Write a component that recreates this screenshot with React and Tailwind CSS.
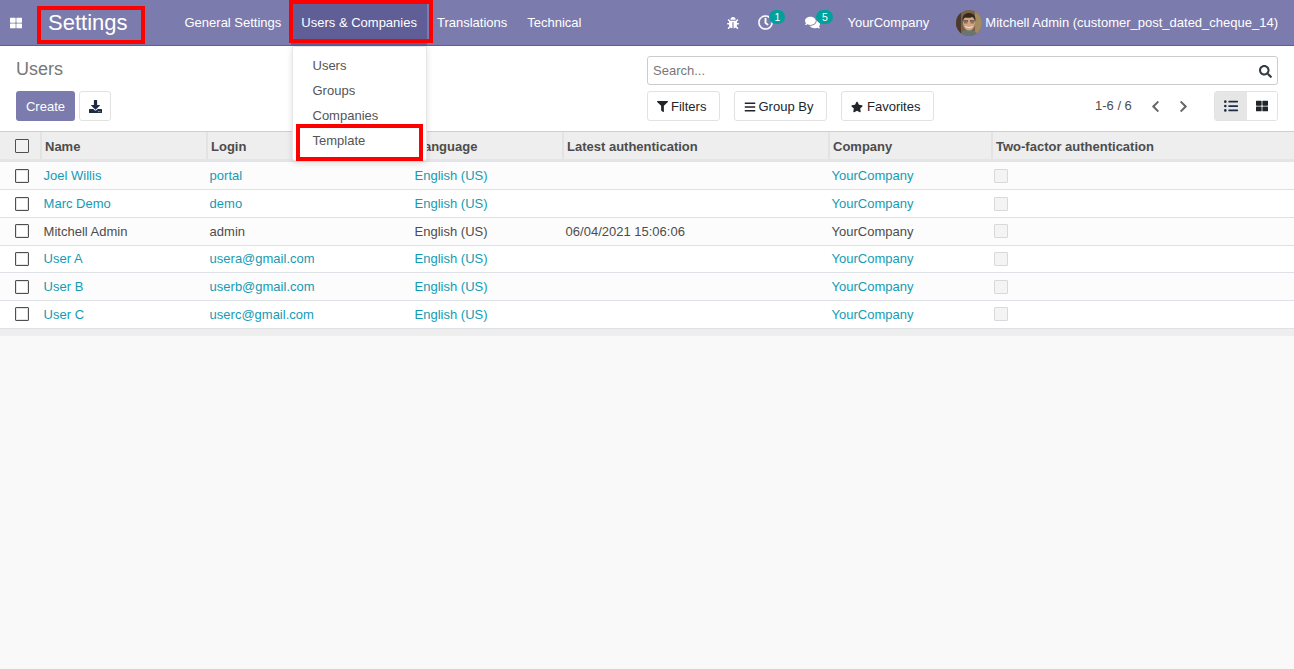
import React from "react";
import { FaBug, FaRegClock, FaComments, FaSearch, FaFilter, FaBars, FaStar, FaDownload, FaListUl, FaThLarge, FaChevronLeft, FaChevronRight } from "react-icons/fa";

const rows = [
  ["Joel Willis", "portal", "", true, "bg-[#fcfcfc] h-[28px]", ""],
  ["Marc Demo", "demo", "", true, "bg-white h-[28px]", ""],
  ["Mitchell Admin", "admin", "06/04/2021 15:06:06", false, "bg-[#fcfcfc] h-[28px]", "mb-px"],
  ["User A", "usera@gmail.com", "", true, "bg-white h-[27px]", ""],
  ["User B", "userb@gmail.com", "", true, "bg-[#fcfcfc] h-[28px]", ""],
  ["User C", "userc@gmail.com", "", true, "bg-white h-[28px]", "mb-px"],
];

const cols = "grid grid-cols-[40px_166px_205px_151px_266px_163px_1fr]";

function Check({ disabled }) {
  return (
    <span className={disabled ? "block w-[14px] h-[14px] border border-[#d9d9d9] bg-[#f4f4f4] rounded-[1px]" : "block w-[14px] h-[14px] border border-[#4f4f4f] bg-white rounded-[1px] shadow-[inset_0_0_0_1px_#e4e4e4]"} />
  );
}

function Head({ children }) {
  return <div className="flex items-center pl-[3px] pt-[2px] h-full font-bold text-[#4c4c4c] border-l-2 border-[#e3e3e3]">{children}</div>;
}

function Avatar() {
  return (
    <svg width="26" height="26" viewBox="0 0 26 26" className="rounded-full">
      <rect width="26" height="26" fill="#7a6248" />
      <rect x="19" width="7" height="26" fill="#a48a60" />
      <rect width="5" height="26" fill="#4a3a2e" />
      <path d="M5 26c0-5 3-6 8-6s8 1 8 6z" fill="#6a7573" />
      <ellipse cx="13" cy="13" rx="6" ry="7.500" fill="#d0a585" />
      <path d="M6.500 11c-.5-6 3-8 6.500-8s7 2 6.500 8c-1-2-2-3.500-3-4-2 1-6 1-7.500.5-1 .5-2 1.500-2.500 3.500z" fill="#35291f" />
      <path d="M7.500 11h4.500M14 11h4.500" stroke="#221b18" strokeWidth="1.200" />
      <rect x="8" y="11" width="3.500" height="2.500" fill="#8d6f5c" />
      <rect x="14.500" y="11" width="3.500" height="2.500" fill="#8d6f5c" />
      <path d="M9.500 16.500c2.500 1.500 4.500 1.500 7 0" stroke="#f1ddd0" strokeWidth="1.200" fill="none" />
    </svg>
  );
}

function Btn({ children, className = "" }) {
  return <div className={`h-[30px] pt-px flex items-center bg-white border border-[#e2e2e2] rounded-[3px] text-[#212529] ${className}`}>{children}</div>;
}

export default function App() {
  return (
    <div className="relative min-h-[669px] bg-[#f9f9f9] text-[13px] text-[#4c4c4c] font-['Liberation_Sans',Arial,sans-serif] overflow-hidden">
      <nav className="h-[46px] bg-[#7c7bad] border-b border-[#5f5e8f] flex items-center text-white">
        <FaThLarge className="ml-[10px] w-3 h-3 text-white" />
        <span className="ml-[26px] text-[22px] leading-none">Settings</span>
        <div className="ml-[47px] flex h-full">
          <span className="px-[10px] flex items-center">General Settings</span>
          <span className="px-[10px] flex items-center bg-[#5f5e97]">Users &amp; Companies</span>
          <span className="px-[10px] flex items-center">Translations</span>
          <span className="px-[10px] flex items-center">Technical</span>
        </div>
        <div className="ml-auto flex items-center pr-4 h-full">
          <FaBug className="w-3 h-3" />
          <span className="relative ml-[19px] w-[16px]">
            <FaRegClock className="w-[15px] h-[15px] stroke-[8]" />
            <span className="absolute left-[11px] top-[-5px] w-4 h-[14px] rounded-full bg-[#00a09d] text-[10.500px] leading-[14px] text-center">1</span>
          </span>
          <span className="relative ml-[31px] w-[16px]">
            <FaComments className="w-[15px] h-[15px]" />
            <span className="absolute left-[11px] top-[-5px] w-[17px] h-[14px] rounded-full bg-[#00a09d] text-[10.500px] leading-[14px] text-center">5</span>
          </span>
          <span className="ml-[26px]">YourCompany</span>
          <span className="ml-[27px]"><Avatar /></span>
          <span className="ml-[3px]">Mitchell Admin (customer_post_dated_cheque_14)</span>
        </div>
      </nav>

      <div className="h-[86px] bg-white flex border-b border-[#cfcfcf]">
        <div className="w-[647px] pl-4 pt-[12px]">
          <div className="text-[18px] leading-[22px] text-[#777777]">Users</div>
          <div className="mt-[11px] flex gap-1">
            <div className="w-[59px] h-[30px] pt-px flex items-center justify-center rounded-[3px] bg-[#7c7bad] text-white">Create</div>
            <Btn className="w-8 justify-center"><FaDownload className="w-[13px] h-[13px] text-[#1f2a44]" /></Btn>
          </div>
        </div>
        <div className="w-[631px] pt-[10px]">
          <div className="h-[29px] pt-px border border-[#cccccc] rounded-[3px] flex items-center justify-between pl-[5px] pr-[5px] bg-white">
            <span className="text-[#777777]">Search...</span>
            <FaSearch className="w-[13px] h-[13px] text-[#343a40]" />
          </div>
          <div className="mt-[6px] flex items-center">
            <Btn className="w-[73px] pl-[9px] gap-[3px]"><FaFilter className="w-[11px] h-[11px]" />Filters</Btn>
            <Btn className="ml-[14px] w-[93px] pl-[9px] gap-[2.500px]"><FaBars className="w-3 h-3" />Group By</Btn>
            <Btn className="ml-[14px] w-[93px] pl-[9px] gap-[4px]"><FaStar className="w-3 h-3" />Favorites</Btn>
            <span className="ml-[161px] text-[#4c4c4c]">1-6 / 6</span>
            <FaChevronLeft className="ml-[18px] w-[11px] h-[13px] text-[#666666]" />
            <FaChevronRight className="ml-[17px] w-[11px] h-[13px] text-[#666666]" />
            <div className="ml-[25px] w-[64px] h-[30px] flex border border-[#e2e2e2] rounded-[3px] overflow-hidden">
              <span className="w-[32px] flex items-center justify-center bg-[#e6e6e6]"><FaListUl className="w-[14px] h-[14px] text-[#1f2a44]" /></span>
              <span className="flex-1 flex items-center justify-center bg-white"><FaThLarge className="w-3 h-3 text-[#212529]" /></span>
            </div>
          </div>
        </div>
      </div>

      <div className={`${cols} h-[30px] bg-[#eeeeee] border-b-[3px] border-[#e3e5e8] items-center`}>
        <div className="flex justify-center pl-[4px]"><span className="block w-[14px] h-[14px] border border-[#4f4f4f] bg-[#f1f1f1] rounded-[1px]" /></div>
        <Head>Name</Head>
        <Head>Login</Head>
        <Head>Language</Head>
        <Head>Latest authentication</Head>
        <Head>Company</Head>
        <Head>Two-factor authentication</Head>
      </div>

      {rows.map(([name, login, last, isLink, rowClass, boxClass]) => {
        const link = isLink ? "text-[#149bb3]" : "text-[#4c4c4c]";
        return (
          <div key={name} className={`${cols} items-center border-b border-[#dee2e6] ${rowClass}`}>
            <div className={`flex justify-center pl-[4px] ${boxClass}`}><Check /></div>
            <div className={`pl-[3.600px] ${link}`}>{name}</div>
            <div className={`pl-[3.600px] ${link}`}>{login}</div>
            <div className={`pl-[3.600px] ${link}`}>English (US)</div>
            <div className="pl-[3.600px] text-[#4c4c4c]">{last}</div>
            <div className={`pl-[3.600px] ${link}`}>YourCompany</div>
            <div className={`pl-[3px] ${boxClass}`}><Check disabled /></div>
          </div>
        );
      })}
      <div className="h-[7px] bg-[#eeeeee]" />

      <div className="absolute left-[292px] top-[46px] w-[135px] h-[115px] bg-white border border-[#e6e6e6] rounded-b-[3px] shadow-[0_2px_6px_rgba(0,0,0,0.12)] pt-[6px] pl-[19.500px] text-[#555555]">
        <div className="h-[25px] leading-[25px]">Users</div>
        <div className="h-[25px] leading-[25px]">Groups</div>
        <div className="h-[25px] leading-[25px]">Companies</div>
        <div className="h-[25px] leading-[25px]">Template</div>
      </div>

      <div className="absolute left-[37px] top-[6px] w-[108px] h-[38px] border-4 border-[#ff0000]" />
      <div className="absolute left-[289px] top-0 w-[144px] h-[43px] border-4 border-[#ff0000]" />
      <div className="absolute left-[296px] top-[124px] w-[127px] h-[37px] border-4 border-[#ff0000]" />
    </div>
  );
}
